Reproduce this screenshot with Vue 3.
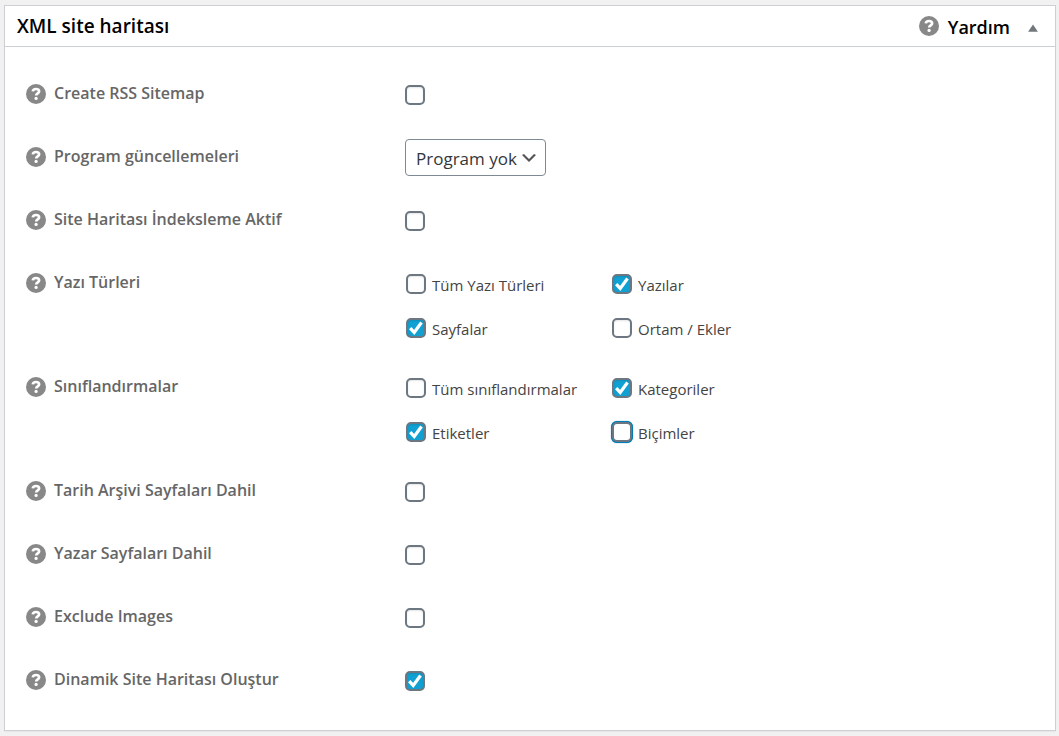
<script setup>
import { ref } from 'vue'

const open = ref(true)

const rows = ref([
  { id: 'rss', label: 'Create RSS Sitemap', type: 'checkbox', checked: false },
  { id: 'schedule', label: 'Program güncellemeleri', type: 'select', value: 'Program yok', options: ['Program yok'] },
  { id: 'index', label: 'Site Haritası İndeksleme Aktif', type: 'checkbox', checked: false },
  {
    id: 'posttypes',
    label: 'Yazı Türleri',
    type: 'group',
    items: [
      { id: 'all-types', label: 'Tüm Yazı Türleri', checked: false },
      { id: 'posts', label: 'Yazılar', checked: true },
      { id: 'pages', label: 'Sayfalar', checked: true },
      { id: 'media', label: 'Ortam / Ekler', checked: false },
    ],
  },
  {
    id: 'taxonomies',
    label: 'Sınıflandırmalar',
    type: 'group',
    items: [
      { id: 'all-tax', label: 'Tüm sınıflandırmalar', checked: false },
      { id: 'categories', label: 'Kategoriler', checked: true },
      { id: 'tags', label: 'Etiketler', checked: true },
      { id: 'formats', label: 'Biçimler', checked: false, active: true },
    ],
  },
  { id: 'date', label: 'Tarih Arşivi Sayfaları Dahil', type: 'checkbox', checked: false },
  { id: 'author', label: 'Yazar Sayfaları Dahil', type: 'checkbox', checked: false },
  { id: 'images', label: 'Exclude Images', type: 'checkbox', checked: false },
  { id: 'dynamic', label: 'Dinamik Site Haritası Oluştur', type: 'checkbox', checked: true },
])
</script>

<template>
  <main class="page">
    <section class="panel">
      <header class="panel-head">
        <h2 class="title">XML site haritası</h2>
        <a class="help-link" href="#">
          <svg class="help-icon" viewBox="0 0 20 20" aria-hidden="true">
            <circle cx="10" cy="10" r="10" fill="#888" />
            <path d="M6.800 7.400C7 5.700 8.200 5 10 5c1.900 0 3.100.9 3.100 2.400 0 2-2.900 2-2.900 4.200" fill="none" stroke="#fff" stroke-width="2.700" />
            <circle cx="10.100" cy="14.400" r="1.600" fill="#fff" />
          </svg>
          <span>Yardım</span>
        </a>
        <button class="toggle" type="button" aria-label="XML site haritası" :aria-expanded="open" @click="open = !open">
          <svg viewBox="0 0 10 8" aria-hidden="true"><path d="M5 0.500L9.900 7.800H0.100z" fill="#72777c" /></svg>
        </button>
      </header>

      <div v-if="open" class="rows">
        <div v-for="row in rows" :key="row.id" class="row">
          <div class="name">
            <button class="help" type="button" :aria-label="row.label">
              <svg class="help-icon" viewBox="0 0 20 20" aria-hidden="true">
                <circle cx="10" cy="10" r="10" fill="#888" />
                <path d="M6.800 7.400C7 5.700 8.200 5 10 5c1.900 0 3.100.9 3.100 2.400 0 2-2.900 2-2.900 4.200" fill="none" stroke="#fff" stroke-width="2.700" />
                <circle cx="10.100" cy="14.400" r="1.600" fill="#fff" />
              </svg>
            </button>
            <span v-if="row.type === 'group'" :id="row.id" class="label">{{ row.label }}</span>
            <label v-else :for="row.id" class="label">{{ row.label }}</label>
          </div>

          <div v-if="row.type === 'group'" class="group" role="group" :aria-labelledby="row.id">
            <div v-for="item in row.items" :key="item.id" class="option">
              <input :id="item.id" v-model="item.checked" class="box" :class="{ active: item.active }" type="checkbox" />
              <label :for="item.id">{{ item.label }}</label>
            </div>
          </div>
          <div v-else-if="row.type === 'select'" class="field select-field">
            <select :id="row.id" v-model="row.value" class="select">
              <option v-for="o in row.options" :key="o">{{ o }}</option>
            </select>
          </div>
          <div v-else class="field">
            <input :id="row.id" v-model="row.checked" class="box" type="checkbox" />
          </div>
        </div>
      </div>
    </section>
  </main>
</template>

<style>
body {
  background: #f1f1f1;
}
</style>

<style scoped>
.page {
  padding: 5px 3px 5px 4px;
  font-family: "Segoe UI", "Open Sans", "Noto Sans", sans-serif;
  color: #444;
}
.panel {
  background: #fff;
  border: 1px solid #ccd0d4;
  box-shadow: 0 1px 1px rgba(0, 0, 0, 0.04);
}
.panel-head {
  display: flex;
  align-items: center;
  height: 40px;
  padding: 0 12px;
  border-bottom: 1px solid #ccd0d4;
}
.title {
  flex: 1;
  margin: 0;
  font-size: 19px;
  line-height: 24px;
  font-weight: 600;
  color: #000;
}
.help-link {
  display: flex;
  align-items: center;
  gap: 9px;
  font-size: 18px;
  line-height: 24px;
  font-weight: 600;
  color: #000;
  text-decoration: none;
}
.help-link span {
  padding-top: 2px;
}
.help-icon {
  display: block;
  width: 20px;
  height: 20px;
}
.toggle,
.help {
  padding: 0;
  border: 0;
  background: none;
  cursor: pointer;
}
.toggle {
  width: 10px;
  margin: 4px 5px 0 18px;
}
.toggle svg {
  display: block;
  width: 10px;
  height: 8px;
}
.rows {
  padding: 16px 21px 18px;
}
.row {
  display: flex;
  align-items: flex-start;
  min-height: 63px;
}
.name {
  display: flex;
  align-items: flex-start;
  width: 379px;
  padding-top: 21px;
  gap: 8px;
}
.label {
  font-size: 16px;
  line-height: 18px;
  font-weight: 600;
  color: #666;
}
.field {
  display: flex;
  padding-top: 22px;
}
.select-field {
  padding-top: 13px;
}
.group {
  display: grid;
  grid-template-columns: 206px 206px;
  row-gap: 22px;
  padding: 21px 0 17px 1px;
}
.option {
  display: flex;
  align-items: center;
  gap: 6px;
  font-size: 15px;
  line-height: 20px;
}
.option label {
  padding-top: 2px;
}
.box {
  appearance: none;
  box-sizing: border-box;
  flex: none;
  width: 20px;
  height: 20px;
  margin: 0;
  border: 2px solid #6c7781;
  border-radius: 5px;
  background: #fff;
  box-shadow: inset 0 1px 2px rgba(0, 0, 0, 0.1);
}
.box:checked {
  background: #11a0d2 url("data:image/svg+xml,%3Csvg xmlns='http://www.w3.org/2000/svg' viewBox='0 0 16 16'%3E%3Cpath d='M2.200 8.200L6.200 12.400L13.500 2.500' fill='none' stroke='white' stroke-width='3.200'/%3E%3C/svg%3E") center / 16px 16px no-repeat;
}
.box.active {
  box-shadow: 0 0 0 1px #007cba, 0 0 1px 1px #007cba;
}
.select {
  appearance: none;
  box-sizing: border-box;
  height: 37px;
  padding: 2px 28px 0 10px;
  border: 1px solid #7e8993;
  border-radius: 4px;
  background: #fff url("data:image/svg+xml,%3Csvg xmlns='http://www.w3.org/2000/svg' viewBox='0 0 20 20'%3E%3Cpath d='M5 6l5 5 5-5 2 1-7 7-7-7 2-1z' fill='%23555'/%3E%3C/svg%3E") right 6px center / 20px 20px no-repeat;
  font-family: inherit;
  font-size: 17px;
  color: #32373c;
}
</style>
